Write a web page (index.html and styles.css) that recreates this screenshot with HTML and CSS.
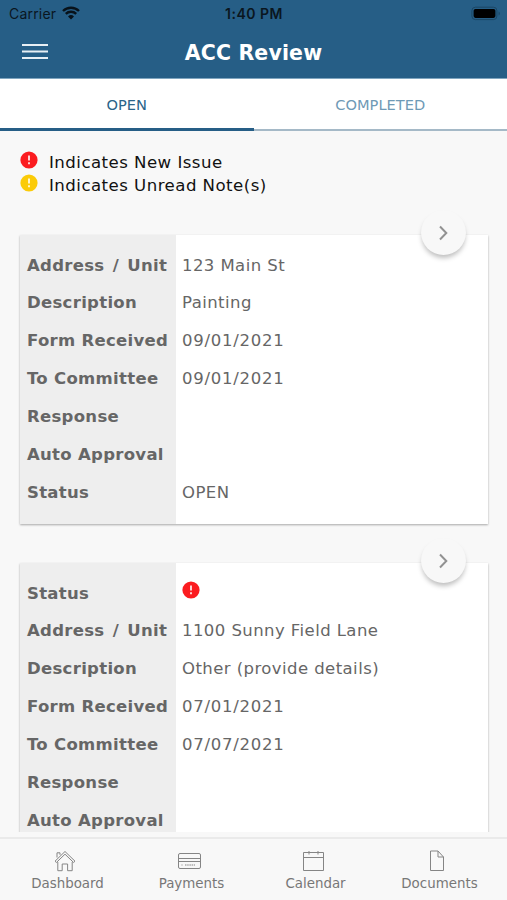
FILE: index.html
```html
<!DOCTYPE html>
<html lang="en">
<head>
<meta charset="utf-8">
<title>ACC Review</title>
<link rel="stylesheet" href="styles.css">
</head>
<body>
<svg class="defs" width="0" height="0">
  <symbol id="alert" viewBox="0 0 18 18"><circle cx="9" cy="9" r="8.6" fill="currentColor"/><path d="M9 4.4v5.2M9 11.3v2" stroke="#fff" stroke-width="1.6"/></symbol>
  <symbol id="chevron" viewBox="0 0 12 18"><path d="M2 2.5l6.3 6.5-6.3 6.5" fill="none" stroke="#929292" stroke-width="2"/></symbol>
</svg>
<header class="header">
  <div class="statusbar">
    <div class="carrier"><span>Carrier</span>
      <svg width="18" height="14" viewBox="0 0 18 14"><path d="M1 5a11.5 11.5 0 0 1 16 0M3.8 7.9a7.5 7.5 0 0 1 10.4 0" fill="none" stroke="#08121a" stroke-width="2.4"/><path d="M9 13.5L6 10.5a4.3 4.3 0 0 1 6 0z" fill="#08121a"/></svg>
    </div>
    <div class="clock">1:40 PM</div>
    <svg class="battery" width="30" height="15" viewBox="0 0 30 15"><rect x=".9" y="1.2" width="25" height="12.4" rx="3.5" fill="none" stroke="#1b4664"/><rect x="2.6" y="2.9" width="21.8" height="9" rx="1.8" fill="#000"/><path d="M27.6 5.4c1.6.6 1.6 3.4 0 4z" fill="#1b4664"/></svg>
  </div>
  <div class="titlebar">
    <svg class="menu" width="26" height="17" viewBox="0 0 26 17"><path d="M0 2h26M0 8.5h26M0 15h26" stroke="#e8eff4" stroke-width="2.2"/></svg>
    <h1>ACC Review</h1>
  </div>
</header>
<nav class="tabs"><div class="tab active">OPEN</div><div class="tab">COMPLETED</div></nav>
<main class="content">
  <div class="legend">
    <div class="legend-row"><svg class="alert new"><use href="#alert"/></svg><span>Indicates New Issue</span></div>
    <div class="legend-row"><svg class="alert note"><use href="#alert"/></svg><span>Indicates Unread Note(s)</span></div>
  </div>
  <section class="card">
    <div class="go"><svg width="12" height="18"><use href="#chevron"/></svg></div>
    <dl>
      <dt class="address">Address / Unit</dt><dd>123 Main St</dd>
      <dt>Description</dt><dd>Painting</dd>
      <dt>Form Received</dt><dd class="date">09/01/2021</dd>
      <dt>To Committee</dt><dd class="date">09/01/2021</dd>
      <dt>Response</dt><dd></dd>
      <dt>Auto Approval</dt><dd></dd>
      <dt>Status</dt><dd>OPEN</dd>
    </dl>
  </section>
  <section class="card">
    <div class="go"><svg width="12" height="18"><use href="#chevron"/></svg></div>
    <dl>
      <dt>Status</dt><dd><svg class="alert new"><use href="#alert"/></svg></dd>
      <dt class="address">Address / Unit</dt><dd>1100 Sunny Field Lane</dd>
      <dt>Description</dt><dd>Other (provide details)</dd>
      <dt>Form Received</dt><dd class="date">07/01/2021</dd>
      <dt>To Committee</dt><dd class="date">07/07/2021</dd>
      <dt>Response</dt><dd></dd>
      <dt>Auto Approval</dt><dd></dd>
    </dl>
  </section>
</main>
<nav class="bottom">
  <div class="item"><svg width="24" height="24" viewBox="0 0 24 24"><path d="M2 12.2L12 2.5l10 9.7-1.4 1.3L12 5.2l-8.6 8.3zM4 8.5V3.8h3v2M4.8 13v8.7h4.4v-6.7h5.4v6.7h4.6V13"/></svg><span>Dashboard</span></div>
  <div class="item"><svg width="24" height="24" viewBox="0 0 24 24"><rect x="1.5" y="4.5" width="22" height="15" rx="1.5"/><path d="M1.5 9.5h22M1.5 12.5h22"/><path d="M4.5 16h1M8 16h10" stroke-dasharray="1.5 .7"/></svg><span>Payments</span></div>
  <div class="item"><svg width="24" height="24" viewBox="0 0 24 24"><path d="M2.5 3.5h20v18h-20zM2.5 8.5h20M8 2v3.5M17 2v3.5"/></svg><span>Calendar</span></div>
  <div class="item"><svg width="24" height="24" viewBox="0 0 24 24"><path d="M5.5 2h7.5l5.5 6v13.5h-13zM13 2v6h5.5"/></svg><span>Documents</span></div>
</nav>
</body>
</html>
```
FILE: styles.css
```css
* { box-sizing: border-box; }
body {
  margin: 0;
  height: 900px;
  display: flex;
  flex-direction: column;
  overflow: hidden;
  background: #f8f8f8;
  font-family: "DejaVu Sans", sans-serif;
}
.defs { position: absolute; }
.header { flex: none; height: 79px; background: #265e86; border-bottom: 1px solid #7fa5bf; }
.statusbar {
  height: 28px;
  display: grid;
  grid-template-columns: 1fr auto 1fr;
  align-items: center;
  padding: 0 6px 0 9px;
  font: 14px/28px Inter, sans-serif;
  color: #0a161f;
}
.carrier { display: flex; align-items: center; gap: 6px; letter-spacing: .2px; }
.carrier svg { margin-top: -3px; }
.clock { font-weight: 600; font-size: 14px; letter-spacing: .5px; margin-left: -2px; }
.battery { justify-self: end; margin-top: -1px; }
.titlebar { display: grid; grid-template-columns: 100px 1fr 100px; align-items: center; height: 50px; }
.menu { margin-left: 22px; margin-top: -4px; }
h1 { margin: 0; font-size: 20.5px; line-height: 50px; letter-spacing: .15px; text-align: center; color: #fff; }
.tabs { flex: none; display: flex; height: 52px; background: #fff; }
.tab {
  flex: 1;
  text-align: center;
  font-size: 14.6px;
  line-height: 51px;
  color: #6f9ab6;
  border-bottom: 2px solid #a5b9c7;
}
.tab.active { color: #2b6489; border-bottom: 3px solid #265e86; }
.content { flex: none; height: 701px; overflow: hidden; padding: 19px 19px 0 20px; }
.legend { height: 85px; font-size: 16.6px; color: #111; }
.legend-row { display: flex; gap: 11px; height: 23px; line-height: 25px; letter-spacing: .46px; }
.alert { width: 18px; height: 18px; flex: none; }
.alert.new { color: #fb1c20; }
.alert.note { color: #fbcb08; }
.legend .alert { margin-top: 1px; }
.card {
  position: relative;
  height: 289px;
  margin-bottom: 39px;
  padding: 11.5px 0;
  background: linear-gradient(to right, #eee 156px, #fff 156px);
  box-shadow: 0 1px 2px rgba(0, 0, 0, .32);
}
dl { display: grid; grid-template-columns: 156px 1fr; grid-auto-rows: 37.9px; margin: 0; font-size: 16.5px; line-height: 38px; color: #666; white-space: nowrap; }
dt { padding-left: 7px; font-weight: bold; letter-spacing: .3px; }
dt.address { word-spacing: 2.2px; }
dd { margin: 0; padding-left: 6px; letter-spacing: .43px; }
dd.date { letter-spacing: .75px; }
dd .alert { display: block; margin-top: 6.5px; }
.go {
  position: absolute;
  top: -25px;
  right: 22px;
  width: 45px;
  height: 45px;
  display: flex;
  align-items: center;
  justify-content: center;
  border-radius: 50%;
  background: #f8f8f8;
  box-shadow: 0 4px 5px -1px rgba(0, 0, 0, .26);
}
.bottom {
  flex: 1;
  display: grid;
  grid-template-columns: repeat(4, 124px);
  justify-content: center;
  margin-top: 5px;
  border-top: 2px solid #eaeaea;
  padding: 10px 0 0;
  background: #f8f8f8;
}
.item { display: flex; flex-direction: column; align-items: center; font-size: 13.4px; line-height: 22px; color: #777; }
.item svg { fill: none; stroke: #858585; stroke-width: 1; margin-left: -5px; }
```
